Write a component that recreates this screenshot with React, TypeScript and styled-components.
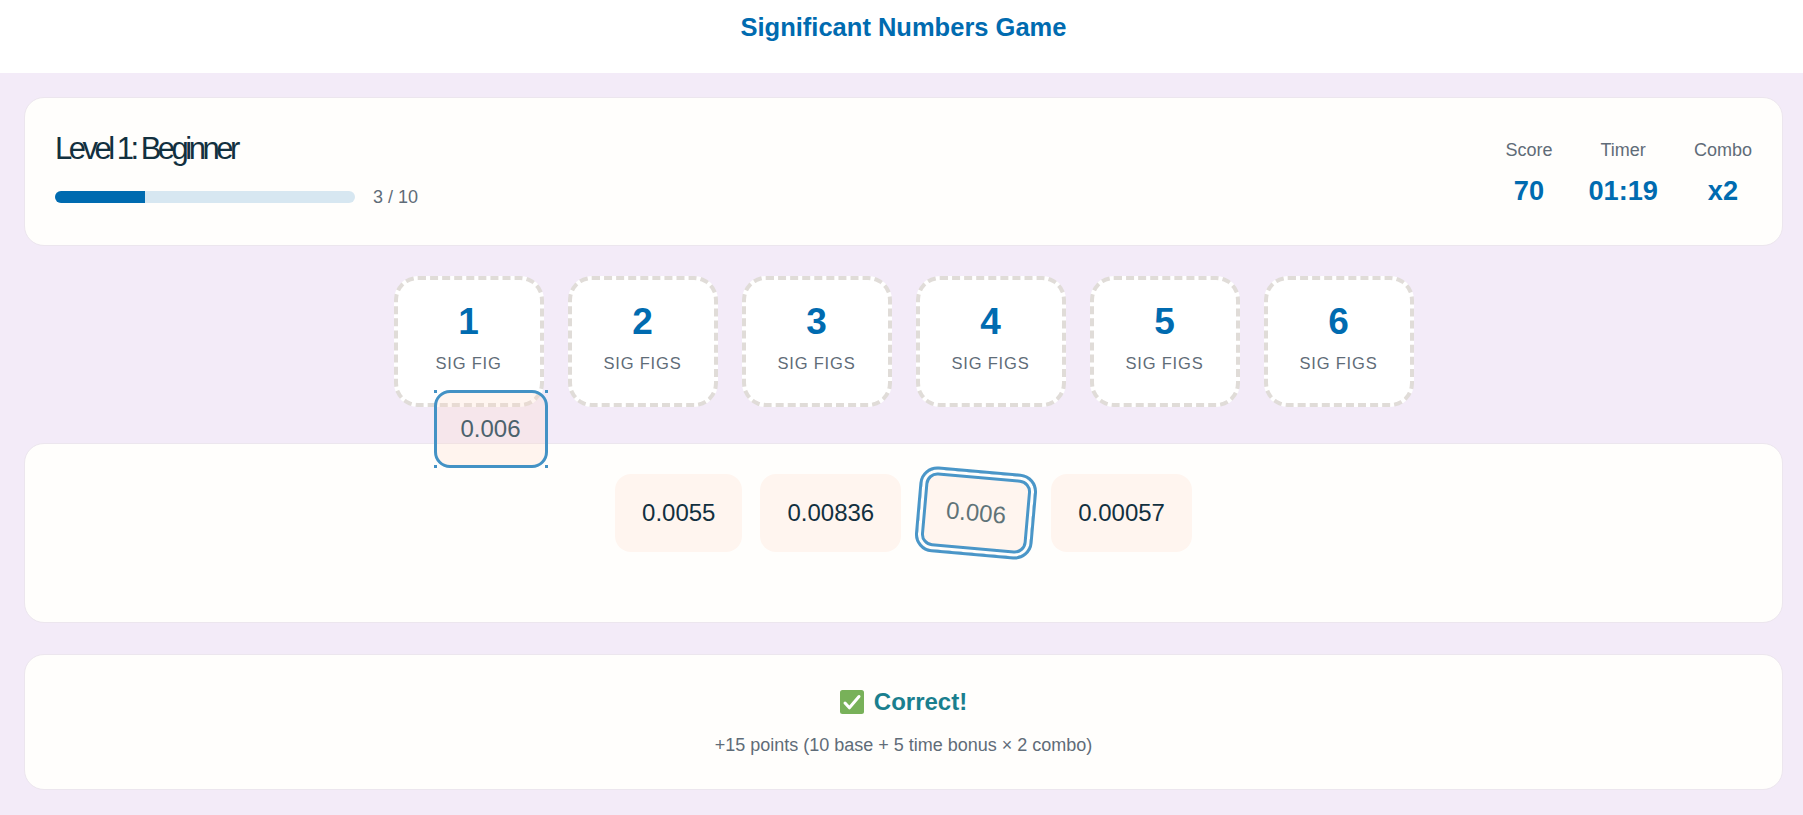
import React from 'react'
import styled, { createGlobalStyle } from 'styled-components'

const GlobalStyle = createGlobalStyle`
  * {
    box-sizing: border-box;
  }

  html, body {
    margin: 0;
    height: 100%;
    overflow: hidden;
    background: #f3ebf8;
    font-family: "Liberation Sans", Arial, sans-serif;
  }
`

const Page = styled.div`
  width: 1807px;
  min-height: 815px;
  background: #f3ebf8;
`

const Header = styled.header`
  height: 73px;
  padding-top: 13px;
  background: #fff;
  text-align: center;
`

const Title = styled.h1`
  margin: 0;
  color: #006bb0;
  font-size: 25.5px;
  line-height: 28px;
  font-weight: 700;
`

const Main = styled.main`
  padding: 24px 24px 0;
  display: flex;
  flex-direction: column;
`

const Card = styled.section`
  background: #fffefc;
  border: 1px solid #ece6ee;
  border-radius: 20px;
`

const StatusCard = styled(Card)`
  height: 149px;
  padding: 0 30px;
  display: flex;
  align-items: center;
  justify-content: space-between;
`

const LevelBlock = styled.div`
  padding-bottom: 6px;
`

const LevelName = styled.h2`
  margin: 0 0 23px;
  padding-top: 1px;
  color: #12303f;
  font-size: 31px;
  line-height: 32px;
  font-weight: 400;
  letter-spacing: -3.5px;
`

const ProgressRow = styled.div`
  display: flex;
  align-items: center;
  gap: 18px;
`

const ProgressTrack = styled.div`
  width: 300px;
  height: 12px;
  border-radius: 6px;
  background: #d7e7f1;
  overflow: hidden;
`

const ProgressFill = styled.div`
  height: 100%;
  background: #006bb0;
`

const ProgressText = styled.span`
  color: #5f6c78;
  font-size: 18px;
  line-height: 18px;
`

const Stats = styled.div`
  display: flex;
  gap: 36px;
  padding-top: 3px;
`

const Stat = styled.div`
  text-align: center;
`

const StatLabel = styled.div`
  color: #5f6c78;
  font-size: 18px;
  line-height: 20px;
  margin-bottom: 16px;
`

const StatValue = styled.div`
  color: #006bb0;
  font-size: 27.2px;
  line-height: 30px;
  font-weight: 700;
`

const Buckets = styled.div`
  margin-top: 30px;
  height: 131px;
  display: flex;
  justify-content: center;
  gap: 24px;
`

const Bucket = styled.div`
  position: relative;
  width: 150px;
  height: 131px;
  padding-top: 22px;
  border: 4px dashed #e0dcd8;
  border-radius: 24px;
  background: #fff;
  text-align: center;
`

const BucketNumber = styled.div`
  color: #006bb0;
  font-size: 37px;
  line-height: 40px;
  font-weight: 700;
`

const BucketLabel = styled.div`
  margin-top: 11px;
  color: #5f6c78;
  font-size: 16.5px;
  line-height: 20px;
  letter-spacing: 0.8px;
`

const NumberChip = styled.div`
  display: flex;
  align-items: center;
  justify-content: center;
  height: 78px;
  padding: 0 27px;
  border-radius: 16px;
  background: #fff5ef;
  color: #12303f;
  font-size: 24px;
`

const DroppedChip = styled(NumberChip)`
  position: absolute;
  left: 36px;
  top: 110px;
  width: 114px;
  height: 78px;
  padding: 0;
  border: 3px solid #4392c5;
  background: rgba(255, 216, 196, 0.25);
  color: #4c626d;

  &::after {
    content: '';
    position: absolute;
    inset: -3px;
    background:
      linear-gradient(#4392c5, #4392c5) left top / 3px 3px no-repeat,
      linear-gradient(#4392c5, #4392c5) right top / 3px 3px no-repeat,
      linear-gradient(#4392c5, #4392c5) left bottom / 3px 3px no-repeat,
      linear-gradient(#4392c5, #4392c5) right bottom / 3px 3px no-repeat;
  }
`

const GhostChip = styled(NumberChip)`
  width: 118px;
  height: 86px;
  margin: -4px -2px;
  padding: 0;
  border: 3px solid #4a96c8;
  border-radius: 18px;
  box-shadow: inset 0 0 0 3px #fffefc, inset 0 0 0 6px #4a96c8;
  color: #5f7378;
  transform: rotate(5deg);
`

const PoolCard = styled(Card)`
  margin-top: 36px;
  height: 180px;
  padding-top: 30px;
  display: flex;
  justify-content: center;
  align-items: flex-start;
  gap: 18px;
`

const FeedbackCard = styled(Card)`
  margin-top: 31px;
  height: 136px;
  padding-top: 33px;
  text-align: center;
`

const FeedbackTitle = styled.div`
  display: flex;
  align-items: center;
  justify-content: center;
  gap: 10px;
  color: #1a7f8e;
  font-size: 24px;
  line-height: 28px;
  font-weight: 700;
`

const FeedbackText = styled.p`
  margin: 19px 0 0;
  color: #5f6c78;
  font-size: 18px;
  line-height: 20px;
`

const CheckIcon = () => (
  <svg width="24" height="24" viewBox="0 0 24 24" aria-hidden="true">
    <rect width="24" height="24" rx="2.5" fill="#78b159" />
    <path d="M5 13l4.4 4.8L19 6.5" fill="none" stroke="#fff" strokeWidth="3" strokeLinecap="round" strokeLinejoin="round" />
  </svg>
)

const stats = [
  { label: 'Score', value: '70' },
  { label: 'Timer', value: '01:19' },
  { label: 'Combo', value: 'x2' },
]

const buckets = [1, 2, 3, 4, 5, 6]

const App: React.FC = () => (
  <Page>
    <GlobalStyle />
    <Header>
      <Title>Significant Numbers Game</Title>
    </Header>

    <Main>
      <StatusCard>
        <LevelBlock>
          <LevelName>Level 1: Beginner</LevelName>
          <ProgressRow>
            <ProgressTrack>
              <ProgressFill style={{ width: `${(3 / 10) * 100}%` }} />
            </ProgressTrack>
            <ProgressText>3 / 10</ProgressText>
          </ProgressRow>
        </LevelBlock>

        <Stats>
          {stats.map(stat => (
            <Stat key={stat.label}>
              <StatLabel>{stat.label}</StatLabel>
              <StatValue>{stat.value}</StatValue>
            </Stat>
          ))}
        </Stats>
      </StatusCard>

      <Buckets>
        {buckets.map(n => (
          <Bucket key={n}>
            <BucketNumber>{n}</BucketNumber>
            <BucketLabel>{n === 1 ? 'SIG FIG' : 'SIG FIGS'}</BucketLabel>
            {n === 1 && <DroppedChip>0.006</DroppedChip>}
          </Bucket>
        ))}
      </Buckets>

      <PoolCard>
        <NumberChip>0.0055</NumberChip>
        <NumberChip>0.00836</NumberChip>
        <GhostChip>0.006</GhostChip>
        <NumberChip>0.00057</NumberChip>
      </PoolCard>

      <FeedbackCard>
        <FeedbackTitle>
          <CheckIcon />
          Correct!
        </FeedbackTitle>
        <FeedbackText>+15 points (10 base + 5 time bonus × 2 combo)</FeedbackText>
      </FeedbackCard>
    </Main>
  </Page>
)

export default App
